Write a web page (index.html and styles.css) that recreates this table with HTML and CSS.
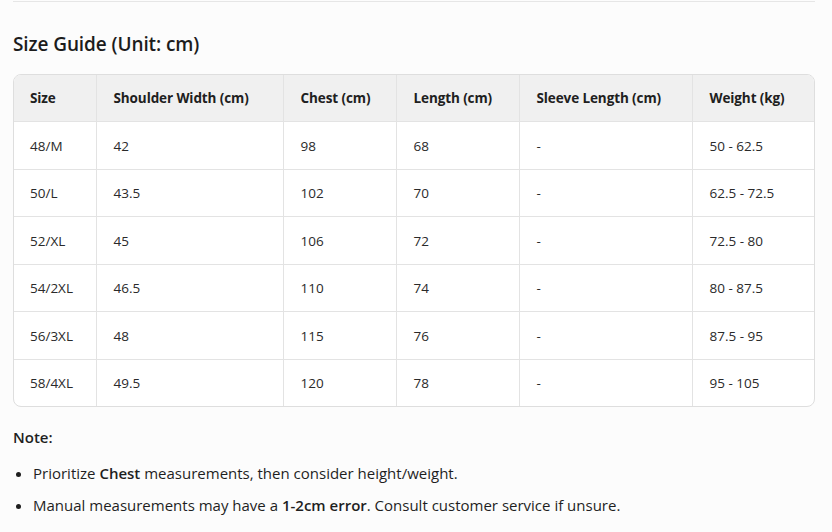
FILE: index.html
```html
<!DOCTYPE html>
<html lang="en">
<head>
<meta charset="utf-8">
<title>Size Guide</title>
<link rel="stylesheet" href="styles.css">
</head>
<body>
<div class="page">
  <hr class="rule">
  <h2 class="title">Size Guide (Unit: cm)</h2>
  <div class="table-wrap">
    <table class="sizes">
      <colgroup>
        <col class="c1"><col class="c2"><col class="c3"><col class="c4"><col class="c5"><col class="c6">
      </colgroup>
      <thead>
        <tr><th>Size</th><th>Shoulder Width (cm)</th><th>Chest (cm)</th><th>Length (cm)</th><th>Sleeve Length (cm)</th><th>Weight (kg)</th></tr>
      </thead>
      <tbody>
        <tr><td>48/M</td><td>42</td><td>98</td><td>68</td><td>-</td><td>50 - 62.5</td></tr>
        <tr><td>50/L</td><td>43.5</td><td>102</td><td>70</td><td>-</td><td>62.5 - 72.5</td></tr>
        <tr><td>52/XL</td><td>45</td><td>106</td><td>72</td><td>-</td><td>72.5 - 80</td></tr>
        <tr><td>54/2XL</td><td>46.5</td><td>110</td><td>74</td><td>-</td><td>80 - 87.5</td></tr>
        <tr><td>56/3XL</td><td>48</td><td>115</td><td>76</td><td>-</td><td>87.5 - 95</td></tr>
        <tr><td>58/4XL</td><td>49.5</td><td>120</td><td>78</td><td>-</td><td>95 - 105</td></tr>
      </tbody>
    </table>
  </div>
  <p class="note-label">Note:</p>
  <ul class="notes">
    <li>Prioritize <strong>Chest</strong> measurements, then consider height/weight.</li>
    <li>Manual measurements may have a <strong>1-2cm error</strong>. Consult customer service if unsure.</li>
  </ul>
</div>
</body>
</html>
```

FILE: styles.css
```css
html, body {
  margin: 0;
  padding: 0;
  background: #fcfcfc;
}
body {
  font-family: "Open Sans", "Noto Sans", sans-serif;
  color: #1f1f1f;
}
.page {
  padding: 0 17px 0 13px;
}
.rule {
  margin: 1px 0 0 0;
  border: 0;
  border-top: 1px solid #e6e6e6;
  height: 0;
}
.title {
  margin: 28px 0 0 0;
  font-size: 19px;
  font-weight: 600;
  line-height: 28px;
  letter-spacing: -0.1px;
  color: #1c1c1c;
}
.table-wrap {
  margin-top: 16px;
  border: 1px solid #dedede;
  border-radius: 8px;
  overflow: hidden;
  background: #ffffff;
}
.sizes {
  width: 100%;
  border-collapse: collapse;
  table-layout: fixed;
  font-size: 13.5px;
}
.c1 { width: 82px; }
.c2 { width: 187px; }
.c3 { width: 113px; }
.c4 { width: 123px; }
.c5 { width: 173px; }
.c6 { width: auto; }
.sizes th,
.sizes td {
  text-align: left;
  padding: 0 0 0 17px;
  height: 46px;
  border-right: 1px solid #e3e3e3;
  border-bottom: 1px solid #e3e3e3;
  white-space: nowrap;
}
.sizes th:first-child,
.sizes td:first-child {
  padding-left: 16px;
}
.sizes tbody tr:nth-child(odd) td {
  height: 47px;
}
.sizes th:last-child,
.sizes td:last-child {
  border-right: 0;
}
.sizes tbody tr:last-child td {
  border-bottom: 0;
}
.sizes th {
  background: #f0f0f0;
  font-weight: 700;
  color: #202020;
  letter-spacing: -0.1px;
}
.sizes td {
  color: #2a2a2a;
}
.note-label {
  margin: 20px 0 0 0;
  font-size: 15px;
  font-weight: 600;
  line-height: 20px;
}
.notes {
  margin: 10px 0 0 0;
  padding-left: 20px;
  font-size: 15px;
  line-height: 32px;
}
.notes strong {
  font-weight: 600;
}
```
